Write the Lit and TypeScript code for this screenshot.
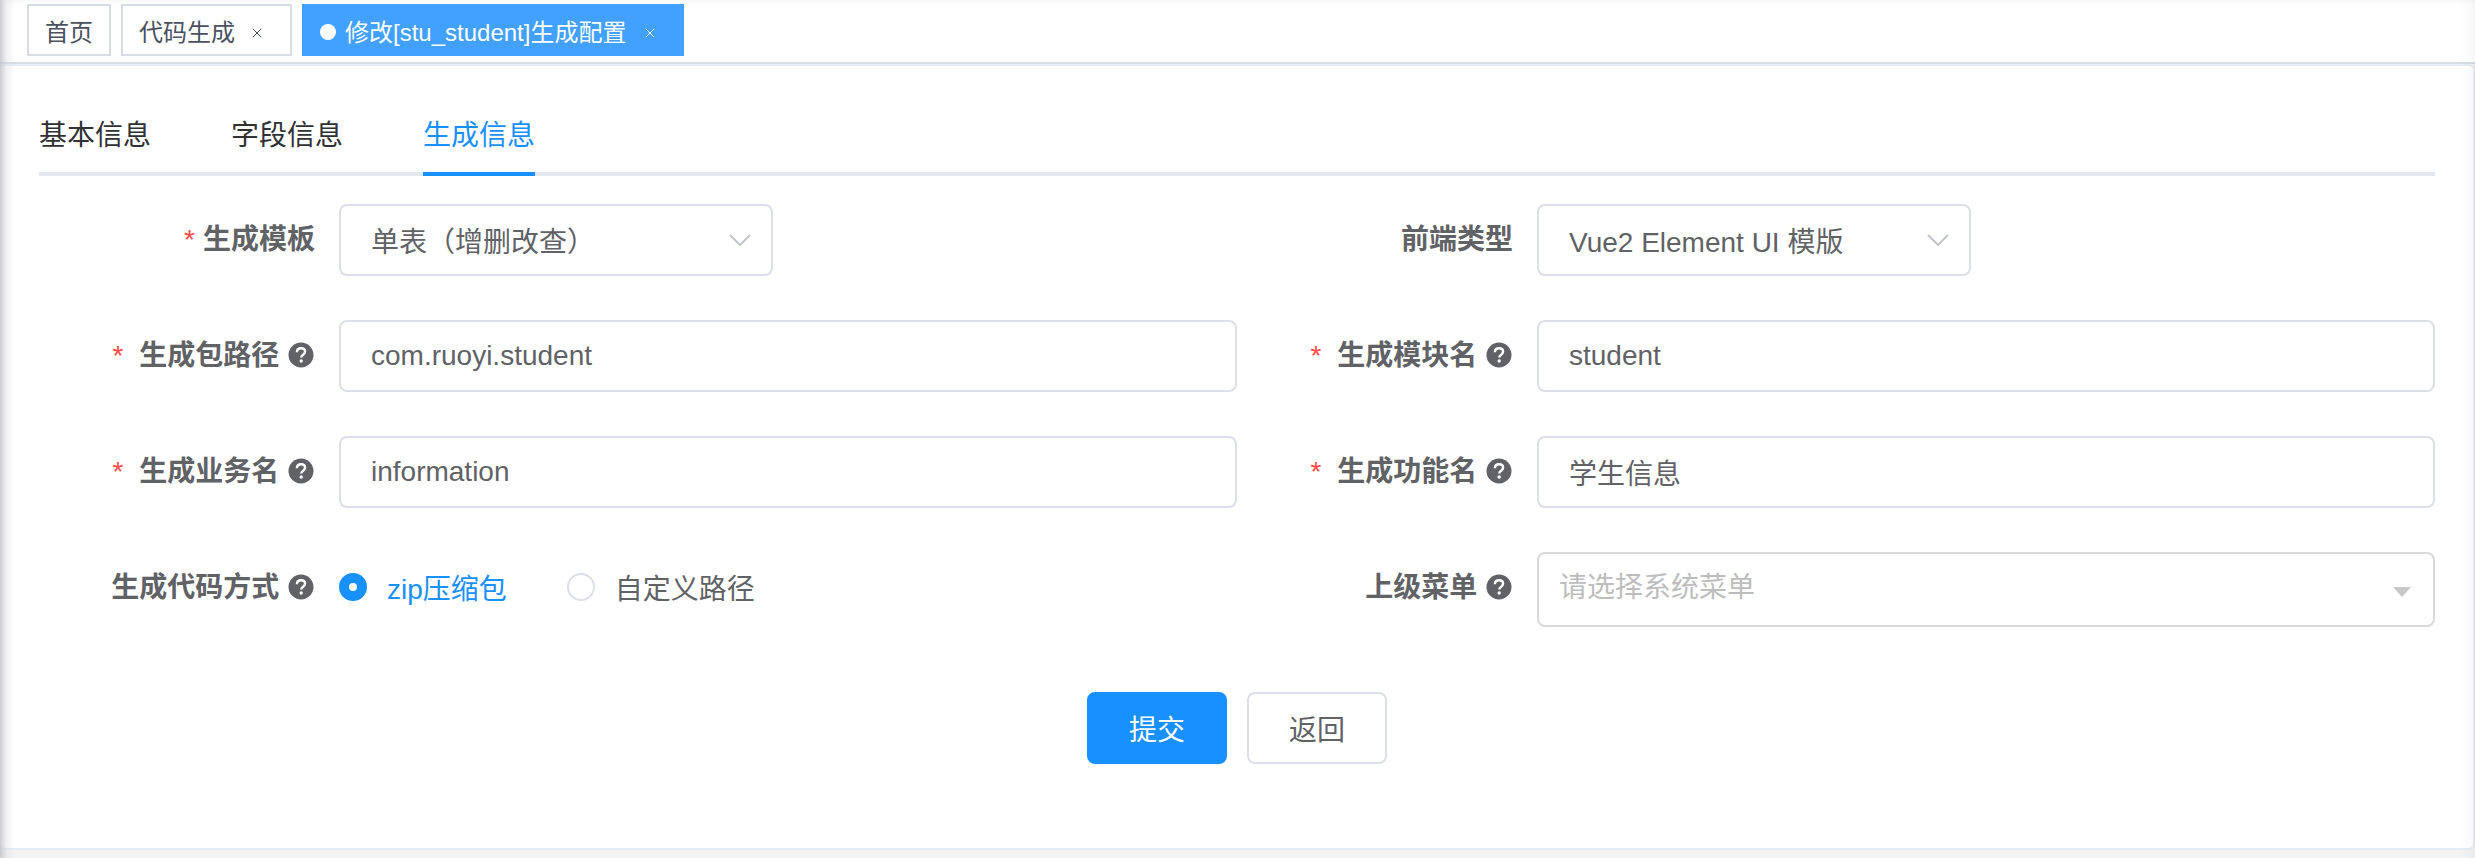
import { LitElement, html, css, svg } from "lit";
import { customElement } from "lit/decorators.js";

const helpIcon = html`<svg class="help" viewBox="0 0 28 28" aria-hidden="true">
  <circle cx="14" cy="14" r="12.5" fill="#606266"></circle>
  <path d="M9.9 11.2c.1-2.5 1.8-3.9 4.2-3.9 2.3 0 4 1.3 4 3.3 0 1.6-.9 2.4-2 3.1-1.1.7-1.8 1.2-1.8 2.7" fill="none" stroke="#fff" stroke-width="2.4"></path>
  <circle cx="14.2" cy="20" r="1.7" fill="#fff"></circle>
</svg>`;

const closeIcon = html`<svg class="close" viewBox="0 0 10 10" aria-hidden="true">
  <path d="M.8.8l8.4 8.4M9.2.8L.8 9.2" fill="none" stroke="currentColor" stroke-width="1"></path>
</svg>`;

const chevron = svg`<path d="M1 1l10 10L21 1" fill="none" stroke="#c0c4cc" stroke-width="2"></path>`;

@customElement("app-root")
export class AppRoot extends LitElement {
  static styles = css`
    :host {
      display: block;
      position: relative;
      height: 858px;
      overflow: hidden;
      background: #f3f3f4;
      font-family: "Liberation Sans", "Noto Sans CJK SC", sans-serif;
      color: #606266;
    }
    .nav {
      height: 64px;
      box-sizing: border-box;
      padding: 4px 0 0 27px;
      border-bottom: 2px solid #d8dce5;
      display: flex;
      gap: 10px;
      background: linear-gradient(#f8f8f8, #fff 6px);
    }
    .tag {
      height: 52px;
      box-sizing: border-box;
      border: 2px solid #d8dce5;
      padding: 0 16px;
      display: flex;
      align-items: center;
      font-size: 24px;
      color: #495060;
      background: #fff;
      white-space: nowrap;
    }
    .tag.closable { padding-right: 17px; }
    .tag.active {
      background: #42a0ff;
      border-color: #42a0ff;
      color: #fff;
      padding-right: 16px;
    }
    .dot {
      width: 16px;
      height: 16px;
      border-radius: 50%;
      background: #fff;
      margin: 4px 9px 0 0;
    }
    .close-wrap {
      width: 32px;
      margin-left: 6px;
      display: flex;
      justify-content: center;
    }
    .tag.active .close-wrap { margin-left: 8px; }
    .close { width: 10px; height: 10px; margin-top: 5px; }
    .card {
      height: 786px;
      box-sizing: border-box;
      background: #fff;
      border: 2px solid #e6ebf5;
      border-radius: 6px;
      border-left-color: transparent;
      padding: 30px 38px 0 37px;
    }
    .tabs {
      display: flex;
      gap: 80px;
      height: 80px;
      box-sizing: border-box;
      border-bottom: 4px solid #e4e7ed;
      margin-bottom: 28px;
    }
    .tab {
      height: 80px;
      box-sizing: border-box;
      line-height: 80px;
      font-size: 28px;
      color: #303133;
    }
    .tab.active {
      color: #1890ff;
      border-bottom: 4px solid #1890ff;
    }
    .form {
      display: grid;
      grid-template-columns: 1fr 1fr;
      row-gap: 44px;
      align-items: start;
    }
    .item { display: flex; align-items: flex-start; }
    .label {
      width: 300px;
      flex: none;
      box-sizing: border-box;
      padding-right: 24px;
      text-align: right;
      font-size: 28px;
      font-weight: 700;
      line-height: 72px;
      white-space: nowrap;
      color: #606266;
    }
    .star {
      color: #ff4949;
      margin-right: 8px;
      font-weight: 400;
    }
    .help {
      width: 28px;
      height: 28px;
      vertical-align: -4px;
    }
    .field {
      flex: 1;
      height: 72px;
      box-sizing: border-box;
      border: 2px solid #dcdfe6;
      border-radius: 8px;
      padding: 0 30px;
      display: flex;
      align-items: center;
      justify-content: space-between;
      font-size: 28px;
      color: #606266;
      background: #fff;
    }
    .field.select {
      flex: none;
      width: 434px;
      padding-right: 20px;
    }
    .chev { width: 22px; height: 12px; flex: none; }
    .tree {
      flex: 1;
      height: 75px;
      box-sizing: border-box;
      border: 2px solid #d9d9d9;
      border-radius: 8px;
      padding: 0 22px 0 20px;
      display: flex;
      align-items: center;
      justify-content: space-between;
      font-size: 28px;
      color: #bdbdbd;
    }
    .tree span {
      align-self: flex-start;
      line-height: 68px;
    }
    .caret { width: 18px; height: 10px; flex: none; margin-top: 4px; }
    .radios {
      display: flex;
      align-items: center;
      height: 70px;
      gap: 60px;
      font-size: 28px;
    }
    .radio { display: flex; align-items: center; gap: 20px; }
    .radio.on { color: #1890ff; }
    .radio span.text { margin-bottom: 1px; }
    .mark {
      width: 28px;
      height: 28px;
      box-sizing: border-box;
      border-radius: 50%;
      border: 2px solid #dcdfe6;
      background: #fff;
      display: flex;
      align-items: center;
      justify-content: center;
    }
    .radio.on .mark { background: #1890ff; border-color: #1890ff; }
    .mark i {
      width: 8px;
      height: 8px;
      border-radius: 50%;
      background: #fff;
    }
    .actions {
      display: flex;
      justify-content: center;
      gap: 20px;
      margin-top: 65px;
    }
    .btn {
      width: 140px;
      height: 72px;
      box-sizing: border-box;
      border: 2px solid #dcdfe6;
      border-radius: 8px;
      background: #fff;
      color: #606266;
      font: inherit;
      font-size: 28px;
      padding: 0;
    }
    .btn.primary {
      background: #1890ff;
      border-color: #1890ff;
      color: #fff;
    }
    .shade-left {
      position: absolute;
      left: 0;
      top: 0;
      bottom: 0;
      width: 15px;
      background: linear-gradient(90deg, rgba(190, 192, 198, 0.8), rgba(210, 212, 216, 0.35) 40%, rgba(255, 255, 255, 0));
      pointer-events: none;
    }
    .shade-right {
      position: absolute;
      right: 0;
      top: 0;
      bottom: 0;
      width: 14px;
      background: linear-gradient(90deg, rgba(0, 0, 0, 0), rgba(0, 0, 0, 0.03));
      pointer-events: none;
    }
  `;

  private label(text: string, required: boolean, help: boolean) {
    const star = required ? html`<span class="star">*</span>` : "";
    return help
      ? html`<div class="label">${star} ${text} ${helpIcon}</div>`
      : html`<div class="label">${star}${text}</div>`;
  }

  private select(text: string) {
    return html`<div class="field select"><span>${text}</span>
      <svg class="chev" viewBox="0 0 22 12" aria-hidden="true">${chevron}</svg></div>`;
  }

  render() {
    return html`
      <div class="nav">
        <div class="tag">首页</div>
        <div class="tag closable">代码生成<span class="close-wrap">${closeIcon}</span></div>
        <div class="tag closable active"><span class="dot"></span>修改[stu_student]生成配置<span class="close-wrap">${closeIcon}</span></div>
      </div>
      <div class="card">
        <div class="tabs">
          <div class="tab">基本信息</div>
          <div class="tab">字段信息</div>
          <div class="tab active">生成信息</div>
        </div>
        <div class="form">
          <div class="item">${this.label("生成模板", true, false)}${this.select("单表（增删改查）")}</div>
          <div class="item">${this.label("前端类型", false, false)}${this.select("Vue2 Element UI 模版")}</div>
          <div class="item">${this.label("生成包路径", true, true)}<div class="field">com.ruoyi.student</div></div>
          <div class="item">${this.label("生成模块名", true, true)}<div class="field">student</div></div>
          <div class="item">${this.label("生成业务名", true, true)}<div class="field">information</div></div>
          <div class="item">${this.label("生成功能名", true, true)}<div class="field">学生信息</div></div>
          <div class="item">${this.label("生成代码方式", false, true)}
            <div class="radios">
              <div class="radio on"><span class="mark"><i></i></span><span class="text">zip压缩包</span></div>
              <div class="radio"><span class="mark"></span><span class="text">自定义路径</span></div>
            </div>
          </div>
          <div class="item">${this.label("上级菜单", false, true)}
            <div class="tree"><span>请选择系统菜单</span>
              <svg class="caret" viewBox="0 0 18 10" aria-hidden="true"><path d="M0 0h18L9 10z" fill="#c8c8c8"></path></svg>
            </div>
          </div>
        </div>
        <div class="actions">
          <button class="btn primary">提交</button>
          <button class="btn">返回</button>
        </div>
      </div>
      <div class="shade-left"></div>
      <div class="shade-right"></div>
    `;
  }
}
